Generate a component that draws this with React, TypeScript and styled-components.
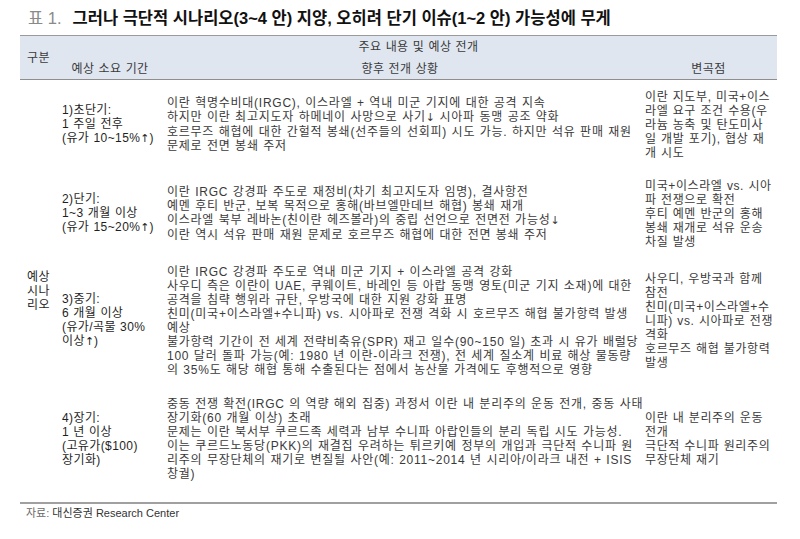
import React from 'react';
import styled, { createGlobalStyle } from 'styled-components';

const GlobalStyle = createGlobalStyle`
  body {
    margin: 0;
    background: #ffffff;
    font-family: 'Liberation Sans', 'Noto Sans CJK KR', sans-serif;
    color: #333333;
  }
`;

const Page = styled.div`
  width: 800px;
  height: 539px;
  box-sizing: border-box;
  padding: 8px 23px 0 20px;
  overflow: hidden;
`;

const Title = styled.h1`
  margin: 0 0 7px;
  padding-left: 8px;
  display: flex;
  gap: 11px;
  font-size: 16.5px;
  line-height: 20px;
  font-weight: 700;
  color: #111111;
  white-space: nowrap;
`;

const TitleNo = styled.span`
  color: #8a8a8a;
  font-weight: 400;
`;

const Table = styled.table`
  width: 757px;
  border-collapse: collapse;
  table-layout: fixed;
  font-size: 12px;
  line-height: 14px;
  letter-spacing: 0.75px;
  word-spacing: 0.5px;
  border-top: 1px solid #9a9a9a;
  border-bottom: 2px solid #a0a0a0;
`;

const HeadRow = styled.tr<{ $h: number; $last?: boolean }>`
  height: ${(p) => p.$h}px;
  background: #dfe6f0;
  ${(p) => (p.$last ? 'border-bottom: 1px solid #8e8e8e;' : '')}
`;

const HeadCell = styled.th<{ $align?: string }>`
  padding: 0 0 0 ${(p) => (p.$align === 'left' ? '7px' : '0')};
  font-weight: 400;
  letter-spacing: 0.4px;
  color: #3a3a3a;
  text-align: ${(p) => p.$align || 'center'};
  vertical-align: middle;
  white-space: nowrap;
`;

const BodyRow = styled.tr<{ $h: number; $pb?: number }>`
  height: ${(p) => p.$h}px;
  & > td {
    padding-bottom: ${(p) => p.$pb || 0}px;
  }
`;

const Cell = styled.td`
  vertical-align: middle;
  padding-top: 0;
  white-space: nowrap;
`;

const GroupCell = styled(Cell)`
  padding-left: 7px;
  color: #1f1f1f;
  letter-spacing: 0.4px;
`;

const PeriodCell = styled(Cell)`
  padding-left: 2px;
  color: #1f1f1f;
  letter-spacing: 0.4px;
`;

const DetailCell = styled(Cell)`
  padding-left: 7px;
  color: #3a3a3a;
`;

const PivotCell = styled(Cell)`
  padding-left: 5px;
  color: #3a3a3a;
  letter-spacing: 0.6px;
`;

const Line = styled.span`
  display: block;
`;

const Arrow = styled.span`
  font-family: 'DejaVu Sans', sans-serif;
  font-size: 11px;
  letter-spacing: 0;
`;

const Source = styled.p`
  margin: 2px 0 0 6px;
  font-size: 11px;
  line-height: 14px;
  color: #333333;
`;

const SourceLabel = styled.span`
  color: #6a6a6a;
`;

type Scenario = {
  height: number;
  padBottom?: number;
  period: string[];
  details: string[];
  pivots: string[];
};

const scenarios: Scenario[] = [
  {
    height: 90,
    period: ['1)초단기:', '1 주일 전후', '(유가 10~15%↑)'],
    details: [
      '이란 혁명수비대(IRGC), 이스라엘 + 역내 미군 기지에 대한 공격 지속',
      '하지만 이란 최고지도자 하메네이 사망으로 사기↓ 시아파 동맹 공조 약화',
      '호르무즈 해협에 대한 간헐적 봉쇄(선주들의 선회피) 시도 가능. 하지만 석유 판매 재원',
      '문제로 전면 봉쇄 주저',
    ],
    pivots: [
      '이란 지도부, 미국+이스',
      '라엘 요구 조건 수용(우',
      '라늄 농축 및 탄도미사',
      '일 개발 포기), 협상 재',
      '개 시도',
    ],
  },
  {
    height: 88,
    period: ['2)단기:', '1~3 개월 이상', '(유가 15~20%↑)'],
    details: [
      '이란 IRGC 강경파 주도로 재정비(차기 최고지도자 임명), 결사항전',
      '예멘 후티 반군, 보복 목적으로 홍해(바브엘만데브 해협) 봉쇄 재개',
      '이스라엘 북부 레바논(친이란 헤즈볼라)의 중립 선언으로 전면전 가능성↓',
      '이란 역시 석유 판매 재원 문제로 호르무즈 해협에 대한 전면 봉쇄 주저',
    ],
    pivots: [
      '미국+이스라엘 vs. 시아',
      '파 전쟁으로 확전',
      '후티 예멘 반군의 홍해',
      '봉쇄 재개로 석유 운송',
      '차질 발생',
    ],
  },
  {
    height: 126,
    period: ['3)중기:', '6 개월 이상', '(유가/곡물 30%', '이상↑)'],
    details: [
      '이란 IRGC 강경파 주도로 역내 미군 기지 + 이스라엘 공격 강화',
      '사우디 측은 이란이 UAE, 쿠웨이트, 바레인 등 아랍 동맹 영토(미군 기지 소재)에 대한',
      '공격을 침략 행위라 규탄, 우방국에 대한 지원 강화 표명',
      '친미(미국+이스라엘+수니파) vs. 시아파로 전쟁 격화 시 호르무즈 해협 불가항력 발생',
      '예상',
      '불가항력 기간이 전 세계 전략비축유(SPR) 재고 일수(90~150 일) 초과 시 유가 배럴당',
      '100 달러 돌파 가능(예: 1980 년 이란-이라크 전쟁), 전 세계 질소계 비료 해상 물동량',
      '의 35%도 해당 해협 통해 수출된다는 점에서 농산물 가격에도 후행적으로 영향',
    ],
    pivots: [
      '사우디, 우방국과 함께',
      '참전',
      '친미(미국+이스라엘+수',
      '니파) vs. 시아파로 전쟁',
      '격화',
      '호르무즈 해협 불가항력',
      '발생',
    ],
  },
  {
    height: 119,
    padBottom: 8,
    period: ['4)장기:', '1 년 이상', '(고유가($100)', '장기화)'],
    details: [
      '중동 전쟁 확전(IRGC 의 역량 해외 집중) 과정서 이란 내 분리주의 운동 전개, 중동 사태',
      '장기화(60 개월 이상) 초래',
      '문제는 이란 북서부 쿠르드족 세력과 남부 수니파 아랍인들의 분리 독립 시도 가능성.',
      '이는 쿠르드노동당(PKK)의 재결집 우려하는 튀르키예 정부의 개입과 극단적 수니파 원',
      '리주의 무장단체의 재기로 변질될 사안(예: 2011~2014 년 시리아/이라크 내전 + ISIS',
      '창궐)',
    ],
    pivots: ['이란 내 분리주의 운동', '전개', '극단적 수니파 원리주의', '무장단체 재기'],
  },
];

// arrows (↑ ↓) get their own font so they read as full-height strokes
const renderText = (text: string) =>
  text.split(/([↑↓])/).map((part, i) =>
    part === '↑' || part === '↓' ? <Arrow key={i}>{part}</Arrow> : part
  );

const lines = (items: string[]) => items.map((t) => <Line key={t}>{renderText(t)}</Line>);

const App: React.FC = () => {
  return (
    <Page>
      <GlobalStyle />
      <Title>
        <TitleNo>표 1.</TitleNo>
        <span>그러나 극단적 시나리오(3~4 안) 지양, 오히려 단기 이슈(1~2 안) 가능성에 무게</span>
      </Title>
      <Table>
        <colgroup>
          <col style={{ width: 40 }} />
          <col style={{ width: 100 }} />
          <col style={{ width: 480 }} />
          <col style={{ width: 137 }} />
        </colgroup>
        <thead>
          <HeadRow $h={23}>
            <HeadCell rowSpan={2} $align="left">
              구분
            </HeadCell>
            <HeadCell colSpan={3}>주요 내용 및 예상 전개</HeadCell>
          </HeadRow>
          <HeadRow $h={21} $last>
            <HeadCell>예상 소요 기간</HeadCell>
            <HeadCell>향후 전개 상황</HeadCell>
            <HeadCell>변곡점</HeadCell>
          </HeadRow>
        </thead>
        <tbody>
          {scenarios.map((s, i) => (
            <BodyRow key={s.period[0]} $h={s.height} $pb={s.padBottom}>
              {i === 0 && (
                <GroupCell rowSpan={scenarios.length}>{lines(['예상', '시나', '리오'])}</GroupCell>
              )}
              <PeriodCell>{lines(s.period)}</PeriodCell>
              <DetailCell>{lines(s.details)}</DetailCell>
              <PivotCell>{lines(s.pivots)}</PivotCell>
            </BodyRow>
          ))}
        </tbody>
      </Table>
      <Source>
        <SourceLabel>자료: </SourceLabel>대신증권 Research Center
      </Source>
    </Page>
  );
};

export default App;
